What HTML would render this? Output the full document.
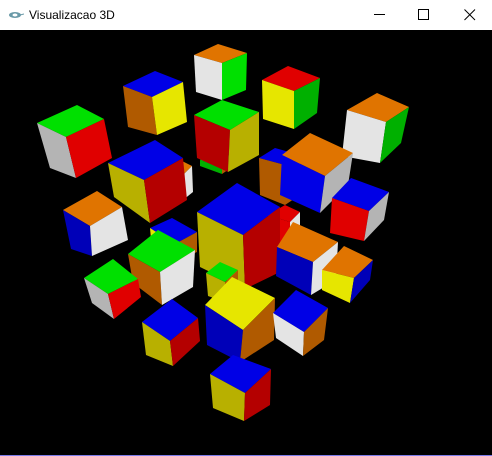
<!DOCTYPE html>
<html><head><meta charset="utf-8"><style>
html,body{margin:0;padding:0;width:492px;height:456px;overflow:hidden;background:#000}
#tb{position:absolute;left:0;top:0;width:492px;height:30px;background:#fff;font-family:"Liberation Sans",sans-serif;font-size:12px;color:#000}
#tb .t{position:absolute;left:29px;top:8px}
#cv{position:absolute;left:0;top:30px}
#bb{position:absolute;left:0;top:455px;width:492px;height:1px;background:#7a7ae8}
</style></head><body>
<div id="tb">
<svg style="position:absolute;left:8px;top:10px" width="16" height="10"><ellipse cx="7" cy="5" rx="6" ry="3" fill="#6a9aa8"/><ellipse cx="7" cy="5" rx="2.5" ry="1.5" fill="#fff"/><path d="M12 5 L16 4" stroke="#6a9aa8"/></svg>
<span class="t">Visualizacao 3D</span>
<svg style="position:absolute;left:374px;top:14px" width="12" height="2"><rect width="11" height="1" fill="#000"/></svg>
<svg style="position:absolute;left:418px;top:9px" width="12" height="12"><rect x="0.5" y="0.5" width="10" height="10" fill="none" stroke="#000"/></svg>
<svg style="position:absolute;left:464px;top:9px" width="12" height="12"><path d="M0.5 0.5L11 11M11 0.5L0.5 11" stroke="#000"/></svg>
</div>
<svg id="cv" width="492" height="426" viewBox="0 30 492 426"></svg>
<div id="bb"></div>
<script>
var C={b:["#0000e6","#0000b8"],r:["#e00000","#b40000"],y:["#e6e600","#b8b000"],g:["#00e000","#00b000"],w:["#e4e4e4","#b4b4b4"],o:["#e07400","#b05a00"]};
function col(c,d){return d?C[c][1]:C[c][0];}
var cubes=[
[[194,55],[218,44],[247,53],[222,63],[196,92],[222,100],[246,90],"o","w","g",0,0],
[[262,80],[288,66],[320,78],[294,91],[263,119],[294,129],[317,113],"r","y","g",0,1],
[[347,110],[377,93],[409,107],[386,122],[342,156],[380,163],[401,143],"o","w","g",0,1],
[[123,86],[155,71],[183,82],[152,97],[128,127],[157,135],[187,122],"b","o","y",1,0],
[[200,160],[215,150],[235,158],[222,168],[200,166],[222,174],[235,165],"g","g","o",1,1],
[[194,115],[222,100],[259,112],[230,130],[197,158],[228,172],[259,155],"g","r","y",1,1],
[[37,123],[77,105],[104,119],[66,137],[50,168],[76,178],[112,158],"g","w","r",1,0],
[[165,170],[180,160],[192,166],[183,175],[168,195],[183,200],[193,192],"o","o","w",1,0],
[[259,158],[275,148],[300,155],[285,165],[260,195],[285,205],[300,195],"b","o","o",1,1],
[[108,163],[155,140],[183,158],[144,180],[114,197],[150,223],[187,200],"b","y","r",1,1],
[[282,155],[310,133],[353,153],[325,176],[280,195],[320,213],[348,185],"o","b","w",0,1],
[[332,198],[351,178],[389,192],[369,211],[330,233],[364,241],[384,220],"b","r","w",0,1],
[[268,215],[285,205],[300,212],[290,222],[268,240],[290,245],[300,235],"r","r","w",0,0],
[[63,210],[97,191],[122,207],[90,226],[71,249],[92,256],[128,240],"o","b","w",1,0],
[[150,228],[172,218],[197,232],[175,244],[152,250],[175,262],[197,252],"b","y","o",0,1],
[[197,212],[237,183],[280,207],[243,235],[200,267],[245,289],[280,272],"b","y","r",1,1],
[[206,273],[220,262],[238,270],[225,282],[208,296],[225,302],[238,296],"g","y","o",1,1],
[[277,247],[293,222],[338,242],[313,262],[276,276],[311,295],[336,280],"o","b","w",1,0],
[[322,270],[344,246],[373,260],[354,278],[322,290],[350,303],[370,280],"o","y","b",0,1],
[[128,254],[158,230],[195,250],[160,272],[133,283],[162,305],[193,287],"g","o","w",1,0],
[[84,278],[113,259],[138,279],[108,294],[92,303],[114,319],[141,297],"g","w","r",1,0],
[[205,305],[232,277],[275,298],[243,330],[207,345],[240,362],[274,340],"y","b","o",1,1],
[[273,313],[296,290],[328,308],[304,332],[276,338],[303,356],[324,340],"b","w","o",0,1],
[[142,322],[172,299],[198,318],[170,341],[146,355],[173,366],[200,341],"b","y","r",1,1],
[[210,374],[233,355],[271,369],[245,393],[213,408],[244,421],[270,405],"b","y","r",1,1]
];
var s="";
function p(pts,f){s+='<polygon points="'+pts.map(function(a){return a.join(",")}).join(" ")+'" fill="'+f+'"/>';}
cubes.forEach(function(c){
 var L=c[0],T=c[1],R=c[2],Cc=c[3],BL=c[4],B=c[5],BR=c[6];
 p([L,T,R,Cc],col(c[7],0));
 p([L,Cc,B,BL],col(c[8],c[10]));
 p([Cc,R,BR,B],col(c[9],c[11]));
});
document.getElementById("cv").innerHTML=s;
</script>
</body></html>
